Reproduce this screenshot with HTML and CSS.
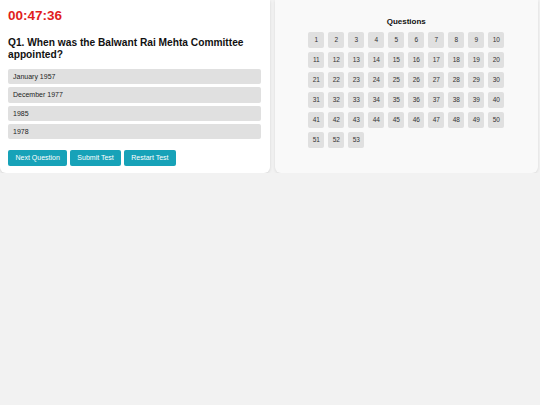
FILE: index.html
```html
<!DOCTYPE html>
<html>
<head>
<meta charset="utf-8">
<link rel="stylesheet" href="styles.css">
</head>
<body>
<div class="layout">
  <section class="quiz-card">
    <div class="timer">00:47:36</div>
    <h2 class="question">Q1. When was the Balwant Rai Mehta Committee appointed?</h2>
    <div class="options">
      <div class="option">January 1957</div>
      <div class="option">December 1977</div>
      <div class="option">1985</div>
      <div class="option">1978</div>
    </div>
    <div class="actions">
      <button class="btn">Next Question</button>
      <button class="btn">Submit Test</button>
      <button class="btn">Restart Test</button>
    </div>
  </section>
  <aside class="nav-card">
    <h3 class="nav-title">Questions</h3>
    <div class="q-grid">
      <div class="q">1</div><div class="q">2</div><div class="q">3</div><div class="q">4</div><div class="q">5</div><div class="q">6</div><div class="q">7</div><div class="q">8</div><div class="q">9</div><div class="q">10</div>
      <div class="q">11</div><div class="q">12</div><div class="q">13</div><div class="q">14</div><div class="q">15</div><div class="q">16</div><div class="q">17</div><div class="q">18</div><div class="q">19</div><div class="q">20</div>
      <div class="q">21</div><div class="q">22</div><div class="q">23</div><div class="q">24</div><div class="q">25</div><div class="q">26</div><div class="q">27</div><div class="q">28</div><div class="q">29</div><div class="q">30</div>
      <div class="q">31</div><div class="q">32</div><div class="q">33</div><div class="q">34</div><div class="q">35</div><div class="q">36</div><div class="q">37</div><div class="q">38</div><div class="q">39</div><div class="q">40</div>
      <div class="q">41</div><div class="q">42</div><div class="q">43</div><div class="q">44</div><div class="q">45</div><div class="q">46</div><div class="q">47</div><div class="q">48</div><div class="q">49</div><div class="q">50</div>
      <div class="q">51</div><div class="q">52</div><div class="q">53</div>
    </div>
  </aside>
</div>
</body>
</html>
```

FILE: styles.css
```css
* { box-sizing: border-box; }
html, body {
  margin: 0;
  padding: 0;
  background: #f2f2f2;
  font-family: "Liberation Sans", Arial, sans-serif;
  color: #111;
}
.layout {
  display: flex;
  gap: 4.5px;
  margin-right: 2px;
  align-items: stretch;
}
.quiz-card {
  width: 270px;
  background: #fff;
  border-radius: 0 0 6px 6px;
  box-shadow: 0 1px 3px rgba(0,0,0,0.12);
  padding: 8px 8px 7px 8px;
}
.timer {
  color: #e11d1d;
  font-weight: bold;
  font-size: 13.5px;
  line-height: 16px;
}
.question {
  margin: 13px 0 8px;
  font-size: 10.2px;
  line-height: 12px;
  font-weight: bold;
  color: #111;
}
.options {
  display: flex;
  flex-direction: column;
  gap: 3px;
  margin-right: 1px;
}
.option {
  background: #e0e0e0;
  border-radius: 2px;
  height: 15.3px;
  padding: 0 5px;
  font-size: 7px;
  line-height: 15.3px;
  color: #222;
}
.actions {
  display: flex;
  gap: 2.5px;
  margin-top: 11px;
}
.btn {
  background: #17a2b8;
  color: #fff;
  border: none;
  border-radius: 2px;
  height: 16px;
  padding: 0 7.5px;
  font-family: "Liberation Sans", Arial, sans-serif;
  font-size: 7px;
  line-height: 16px;
}
.nav-card {
  flex: 1;
  background: #f9f9f9;
  border-radius: 0 0 6px 6px;
  box-shadow: 0 1px 3px rgba(0,0,0,0.1);
  padding: 16.5px 0 0;
}
.nav-title {
  margin: 0 0 6.5px;
  text-align: center;
  font-size: 8px;
  line-height: 9px;
  font-weight: bold;
  color: #111;
}
.q-grid {
  display: grid;
  grid-template-columns: repeat(10, 16px);
  grid-auto-rows: 16px;
  gap: 4px;
  justify-content: center;
}
.q {
  background: #e0e0e0;
  border-radius: 2px;
  font-size: 6.5px;
  line-height: 16px;
  text-align: center;
  color: #333;
}
```
